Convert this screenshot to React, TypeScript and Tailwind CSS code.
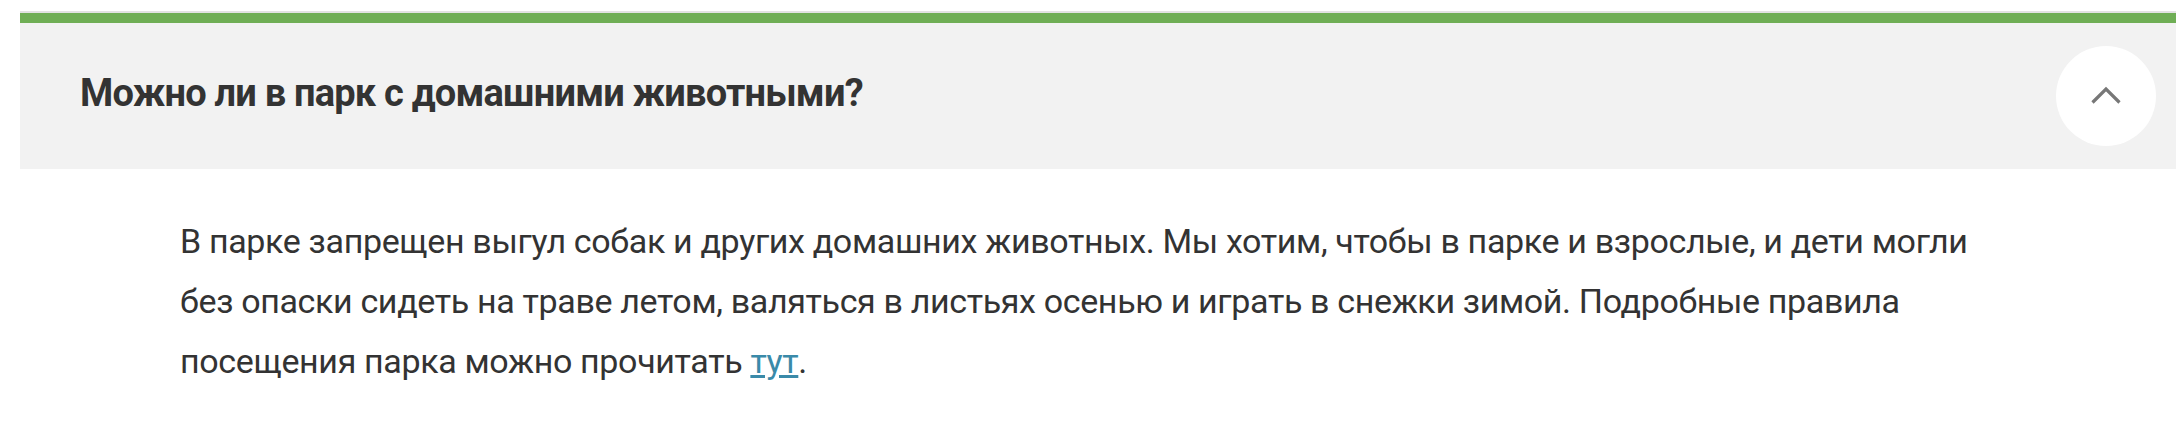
export default function App() {
  return (
    <div className="w-full h-[426px] bg-white pt-[11px] pl-[20px] overflow-hidden">
      <div className="border-t-2 border-[#e2e2e2]">
        <div className="h-[10px] bg-[#6fae55]" />
        <div className="flex items-center justify-between h-[146px] bg-[#f2f2f2] pl-[60px] pr-[20px]">
          <h3 className="pb-[6px] font-['Roboto',sans-serif] font-bold text-[38px] tracking-[-0.8px] text-[#333] whitespace-nowrap">
            Можно ли в парк с домашними животными?
          </h3>
          <button className="flex items-center justify-center w-[100px] h-[100px] rounded-full bg-white">
            <svg width="30" height="18" viewBox="0 0 30 18" className="-mt-[3px]">
              <polyline points="1.5,16.5 15,3 28.5,16.5" fill="none" stroke="#777" strokeWidth="3.2" />
            </svg>
          </button>
        </div>
        <div className="pl-[160px] pt-[42px] font-['Roboto',sans-serif] text-[34px] leading-[60px] tracking-[-0.35px] text-[#333]">
          <p className="whitespace-nowrap">
            В парке запрещен выгул собак и других домашних животных. Мы хотим, чтобы в парке и взрослые, и дети могли
          </p>
          <p className="whitespace-nowrap">
            без опаски сидеть на траве летом, валяться в листьях осенью и играть в снежки зимой. Подробные правила
          </p>
          <p className="whitespace-nowrap">
            посещения парка можно прочитать <a href="#" className="text-[#3a8aa9] underline">тут</a>.
          </p>
        </div>
      </div>
    </div>
  );
}
